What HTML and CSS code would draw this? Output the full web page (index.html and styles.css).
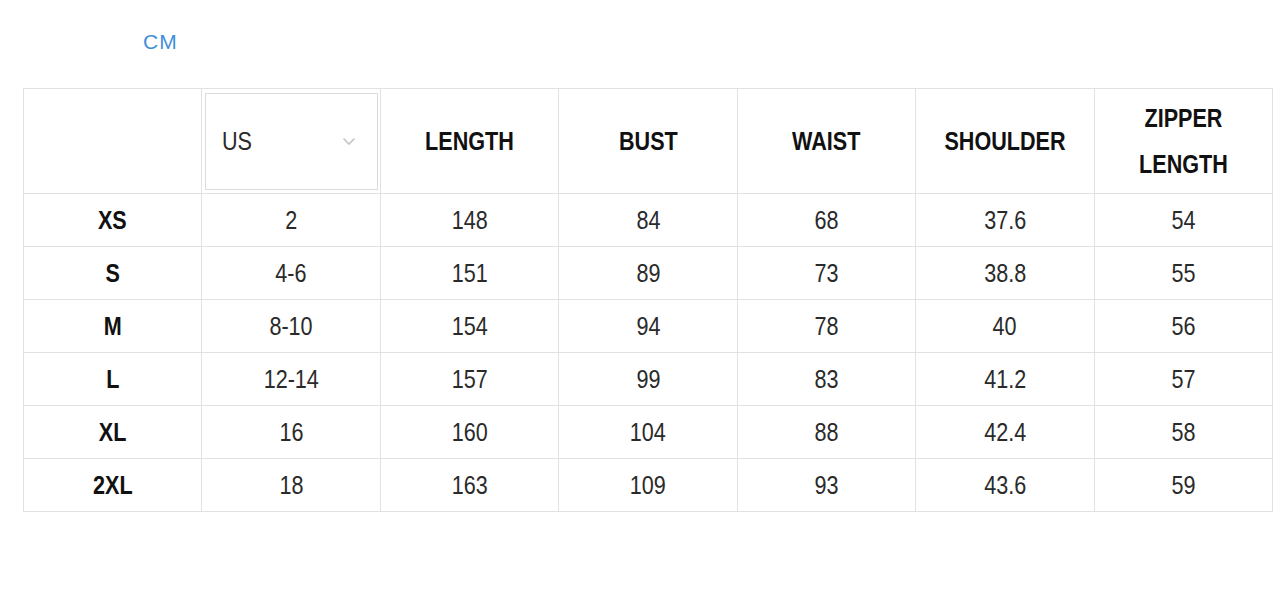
FILE: index.html
```html
<!DOCTYPE html>
<html>
<head>
<meta charset="utf-8">
<link rel="stylesheet" href="styles.css">
</head>
<body>
<div class="page">
  <div class="units"><span class="unit-active">CM</span></div>
  <table class="chart">
    <thead>
      <tr>
        <th class="corner"></th>
        <th class="region-cell">
          <div class="region-select">
            <span class="t region-value">US</span>
            <svg class="chev" width="14" height="9" viewBox="0 0 14 9"><path d="M1.5 1.5 L7 7 L12.5 1.5" fill="none" stroke="#c4c4c4" stroke-width="1.6"/></svg>
          </div>
        </th>
        <th><span class="t">LENGTH</span></th>
        <th><span class="t">BUST</span></th>
        <th><span class="t">WAIST</span></th>
        <th><span class="t">SHOULDER</span></th>
        <th><span class="t">ZIPPER<br>LENGTH</span></th>
      </tr>
    </thead>
    <tbody>
      <tr><th class="size"><span class="t">XS</span></th><td><span class="t">2</span></td><td><span class="t">148</span></td><td><span class="t">84</span></td><td><span class="t">68</span></td><td><span class="t">37.6</span></td><td><span class="t">54</span></td></tr>
      <tr><th class="size"><span class="t">S</span></th><td><span class="t">4-6</span></td><td><span class="t">151</span></td><td><span class="t">89</span></td><td><span class="t">73</span></td><td><span class="t">38.8</span></td><td><span class="t">55</span></td></tr>
      <tr><th class="size"><span class="t">M</span></th><td><span class="t">8-10</span></td><td><span class="t">154</span></td><td><span class="t">94</span></td><td><span class="t">78</span></td><td><span class="t">40</span></td><td><span class="t">56</span></td></tr>
      <tr><th class="size"><span class="t">L</span></th><td><span class="t">12-14</span></td><td><span class="t">157</span></td><td><span class="t">99</span></td><td><span class="t">83</span></td><td><span class="t">41.2</span></td><td><span class="t">57</span></td></tr>
      <tr><th class="size"><span class="t">XL</span></th><td><span class="t">16</span></td><td><span class="t">160</span></td><td><span class="t">104</span></td><td><span class="t">88</span></td><td><span class="t">42.4</span></td><td><span class="t">58</span></td></tr>
      <tr><th class="size"><span class="t">2XL</span></th><td><span class="t">18</span></td><td><span class="t">163</span></td><td><span class="t">109</span></td><td><span class="t">93</span></td><td><span class="t">43.6</span></td><td><span class="t">59</span></td></tr>
    </tbody>
  </table>
</div>
</body>
</html>
```

FILE: styles.css
```css
html, body {
  margin: 0;
  padding: 0;
  background: #ffffff;
}

.page {
  padding-left: 23px;
}

.units {
  height: 88px;
  display: flex;
  align-items: center;
  padding-left: 120px;
  box-sizing: border-box;
  padding-bottom: 4px;
}

.unit-active {
  font-family: "Liberation Sans", Arial, sans-serif;
  font-size: 21px;
  letter-spacing: 1px;
  color: #3f8fd8;
}

.chart {
  width: 1250px;
  border-collapse: collapse;
  table-layout: fixed;
  font-family: "Liberation Sans", Arial, sans-serif;
  font-size: 26px;
  color: #2a2a2a;
}

.chart th,
.chart td {
  border: 1px solid #e2e2e2;
  text-align: center;
  vertical-align: middle;
  padding: 0;
}

.t {
  display: inline-block;
  transform: scaleX(0.83);
  transform-origin: center center;
}

.chart thead th {
  height: 104px;
  font-weight: bold;
  color: #111111;
  line-height: 46px;
}

.chart tbody td,
.chart tbody th {
  height: 52px;
}

.chart tbody tr.tall td,
.chart tbody tr.tall th {
  height: 53px;
}

.chart .size {
  font-weight: bold;
  color: #111111;
}

.chart th.region-cell {
  padding: 0;
  text-align: left;
}

.region-select {
  box-sizing: border-box;
  height: 97px;
  margin: 3px 2px 3px 3px;
  border: 1px solid #dcdcdc;
  display: flex;
  align-items: center;
  justify-content: space-between;
  padding: 0 21px 0 16px;
  font-weight: normal;
  color: #2a2a2a;
}

.region-value {
  line-height: 1;
  transform-origin: left center;
}

.chev {
  display: block;
}
```
